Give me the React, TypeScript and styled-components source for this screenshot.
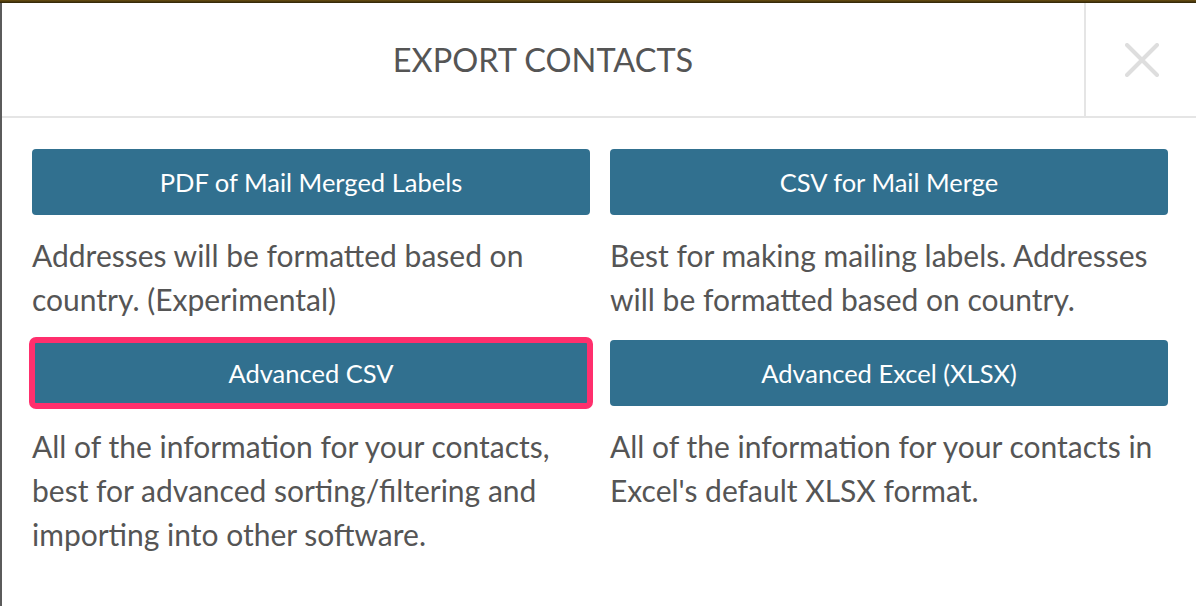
import * as React from 'react'
import styled, {createGlobalStyle} from 'styled-components'

const GlobalStyle = createGlobalStyle`
  html, body {
    margin: 0;
    padding: 0;
    background: #fff;
  }
  body {
    font-family: Lato, "Open Sans", "Liberation Sans", sans-serif;
    overflow: hidden;
  }
`

const Page = styled.div`
  width: 1196px;
  height: 606px;
  display: flex;
  flex-direction: column;
  overflow: hidden;
`

const TopBar = styled.div`
  height: 3px;
  flex: none;
  background: linear-gradient(#6a5012, #2e2408);
`

const Stage = styled.div`
  flex: 1;
  display: flex;
  min-height: 0;
`

const Backdrop = styled.div`
  width: 2px;
  flex: none;
  background: #5b5b5b;
`

const Modal = styled.div`
  width: 1196px;
  flex: none;
  background: #fff;
  display: flex;
  flex-direction: column;
`

const Header = styled.div`
  height: 113px;
  display: flex;
  border-bottom: 2px solid #e5e5e5;
`

const Title = styled.h2`
  flex: 1;
  margin: 0;
  display: flex;
  align-items: center;
  justify-content: center;
  font-size: 32.5px;
  font-weight: 400;
  color: #555;
`

const CloseButton = styled.button`
  width: 114px;
  flex: none;
  border: none;
  border-left: 2px solid #e5e5e5;
  background: #fff;
  padding: 0;
  display: flex;
  align-items: center;
  justify-content: center;
  cursor: pointer;
`

const Body = styled.div`
  padding: 31px 30px 0;
  display: grid;
  grid-template-columns: 558px 558px;
  column-gap: 20px;
  align-items: start;
`

const Option = styled.div`
  display: flex;
  flex-direction: column;
`

const ExportButton = styled.button<{$highlight?: boolean}>`
  height: 66px;
  border: none;
  border-radius: 4px;
  background: #31708f;
  color: #fff;
  font-family: inherit;
  font-size: 25.5px;
  cursor: pointer;
  outline: ${p => (p.$highlight ? '6px solid #ff2f6d' : 'none')};
  outline-offset: -3px;
`

const Description = styled.p`
  margin: 18px 0 19px;
  font-size: 30px;
  line-height: 44px;
  color: #555;
`

const options = [
  {label: 'PDF of Mail Merged Labels', text: 'Addresses will be formatted based on country. (Experimental)'},
  {label: 'CSV for Mail Merge', text: 'Best for making mailing labels. Addresses will be formatted based on country.'},
  {label: 'Advanced CSV', text: 'All of the information for your contacts, best for advanced sorting/filtering and importing into other software.', highlight: true},
  {label: 'Advanced Excel (XLSX)', text: "All of the information for your contacts in Excel's default XLSX format."},
]

const CloseIcon = () => (
  <svg width="34" height="34" viewBox="0 0 34 34">
    <path d="M2 2 L32 32 M32 2 L2 32" stroke="#dedede" strokeWidth="4" strokeLinecap="round" />
  </svg>
)

const App = () => {
  return (
    <Page>
      <GlobalStyle />
      <TopBar />
      <Stage>
        <Backdrop />
        <Modal>
          <Header>
            <Title>EXPORT CONTACTS</Title>
            <CloseButton aria-label="Close"><CloseIcon /></CloseButton>
          </Header>
          <Body>
            {options.map(option => (
              <Option key={option.label}>
                <ExportButton $highlight={option.highlight}>{option.label}</ExportButton>
                <Description>{option.text}</Description>
              </Option>
            ))}
          </Body>
        </Modal>
      </Stage>
    </Page>
  )
}

export default App
